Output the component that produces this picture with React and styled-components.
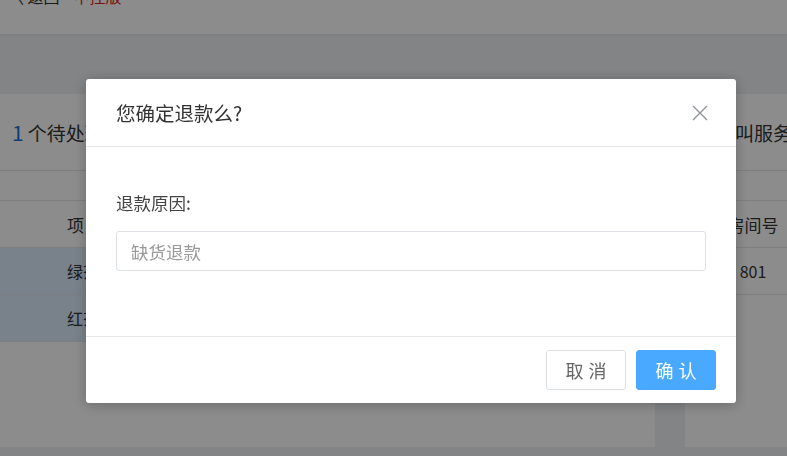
import React from 'react';
import styled, { createGlobalStyle } from 'styled-components';

const GlobalStyle = createGlobalStyle`
  html, body {
    margin: 0;
    padding: 0;
    overflow: hidden;
  }
  body {
    font-family: "Noto Sans CJK SC", "Liberation Sans", sans-serif;
    color: #333;
    background: #eef0f2;
  }
  * {
    box-sizing: border-box;
  }
`

const Page = styled.div`
  height: 456px;
  display: flex;
  flex-direction: column;
  background: #eef0f2;
`

const TopBar = styled.div`
  height: 34px;
  flex: none;
  background: #fff;
  display: flex;
  align-items: flex-start;
  gap: 14px;
  padding-left: 8px;
  overflow: hidden;
  box-shadow: 0 1px 3px rgba(0, 0, 0, 0.06);
`

const Crumb = styled.span`
  font-size: 16px;
  line-height: 20px;
  margin-top: -14px;
  color: ${props => props.red ? '#e02020' : '#333'};
`

const Content = styled.div`
  flex: 1;
  display: flex;
  gap: 30px;
  padding: 60px 0 9px;
  min-height: 0;
`

const Panel = styled.div`
  background: #fff;
  width: ${props => props.width || 'auto'};
  flex: ${props => props.width ? 'none' : '1'};
  overflow: hidden;
`

const PanelHead = styled.div`
  height: 77px;
  display: flex;
  align-items: center;
  padding-left: 12px;
  border-bottom: 1px solid #e4e6e9;
  white-space: nowrap;
  font-size: 19px;
`

const Count = styled.span`
  color: #1a73d9;
  font-size: 21px;
  margin-right: 4px;
`

const Tabs = styled.div`
  height: 30px;
  border-bottom: 1px solid #e4e6e9;
`

const Row = styled.div`
  height: 47px;
  display: flex;
  align-items: center;
  border-bottom: 1px solid #e4e6e9;
  background: ${props => props.active ? '#dcecfd' : '#fff'};
  font-size: ${props => props.head ? '17px' : '16px'};
  color: #333;
  white-space: nowrap;
`

const Cell = styled.div`
  flex: none;
  width: ${props => props.w}px;
  padding-left: ${props => props.pl || 0}px;
  text-align: ${props => props.center ? 'center' : 'left'};
`

const Overlay = styled.div`
  position: fixed;
  inset: 0;
  background: rgba(0, 0, 0, 0.45);
  display: flex;
  align-items: flex-start;
  padding: 79px 0 0 86px;
`

const Dialog = styled.div`
  width: 650px;
  background: #fff;
  border-radius: 3px;
  box-shadow: 0 2px 14px rgba(0, 0, 0, 0.25);
`

const DialogHeader = styled.div`
  height: 68px;
  display: flex;
  align-items: center;
  justify-content: space-between;
  padding: 0 28px 0 30px;
  border-bottom: 1px solid #e6e6e6;
`

const DialogTitle = styled.h3`
  margin: 0;
  font-size: 19.5px;
  font-weight: normal;
  color: #333;
`

const CloseBtn = styled.button`
  border: none;
  background: none;
  padding: 0;
  width: 16px;
  height: 16px;
  display: flex;
  cursor: pointer;
`

const DialogBody = styled.div`
  padding: 46px 30px 65px;
  border-bottom: 1px solid #e6e6e6;
`

const Label = styled.label`
  display: block;
  font-size: 17.5px;
  line-height: 20px;
  color: #444;
  margin-bottom: 18px;
`

const Input = styled.input`
  display: block;
  width: 100%;
  height: 40px;
  border: 1px solid #dcdfe6;
  border-radius: 3px;
  padding: 0 14px;
  font-size: 17.5px;
  font-family: inherit;
  color: #333;
  outline: none;

  &::placeholder {
    color: #999;
  }
`

const DialogFooter = styled.div`
  display: flex;
  justify-content: flex-end;
  gap: 10px;
  padding: 13px 20px;
`

const Button = styled.button`
  width: 80px;
  height: 40px;
  border-radius: 3px;
  font-size: 18px;
  font-family: inherit;
  letter-spacing: 5px;
  text-indent: 5px;
  cursor: pointer;
  border: 1px solid ${props => props.primary ? '#49a9ff' : '#dcdfe6'};
  background: ${props => props.primary ? '#49a9ff' : '#fff'};
  color: ${props => props.primary ? '#fff' : '#666'};
`

export default function App() {
  return (
    <>
      <GlobalStyle />
      <Page>
        <TopBar>
          <Crumb>〈 返回</Crumb>
          <Crumb red>中控版</Crumb>
        </TopBar>
        <Content>
          <Panel width="655px">
            <PanelHead><Count>1</Count>个待处理退款订单</PanelHead>
            <Tabs />
            <Row head>
              <Cell w={200} pl={67}>项目</Cell>
              <Cell w={200}>数量</Cell>
            </Row>
            <Row active>
              <Cell w={200} pl={67}>绿茶</Cell>
              <Cell w={200}>1</Cell>
            </Row>
            <Row active>
              <Cell w={200} pl={67}>红茶</Cell>
              <Cell w={200}>1</Cell>
            </Row>
          </Panel>
          <Panel>
            <PanelHead>已呼叫服务</PanelHead>
            <Tabs />
            <Row head>
              <Cell w={136} center>房间号</Cell>
            </Row>
            <Row>
              <Cell w={136} center>801</Cell>
            </Row>
          </Panel>
        </Content>
      </Page>
      <Overlay>
        <Dialog>
          <DialogHeader>
            <DialogTitle>您确定退款么?</DialogTitle>
            <CloseBtn aria-label="关闭">
              <svg width="16" height="16" viewBox="0 0 16 16">
                <path d="M1 1 L15 15 M15 1 L1 15" stroke="#909399" strokeWidth="1.4" fill="none" />
              </svg>
            </CloseBtn>
          </DialogHeader>
          <DialogBody>
            <Label>退款原因:</Label>
            <Input placeholder="缺货退款" />
          </DialogBody>
          <DialogFooter>
            <Button>取消</Button>
            <Button primary>确认</Button>
          </DialogFooter>
        </Dialog>
      </Overlay>
    </>
  );
}
